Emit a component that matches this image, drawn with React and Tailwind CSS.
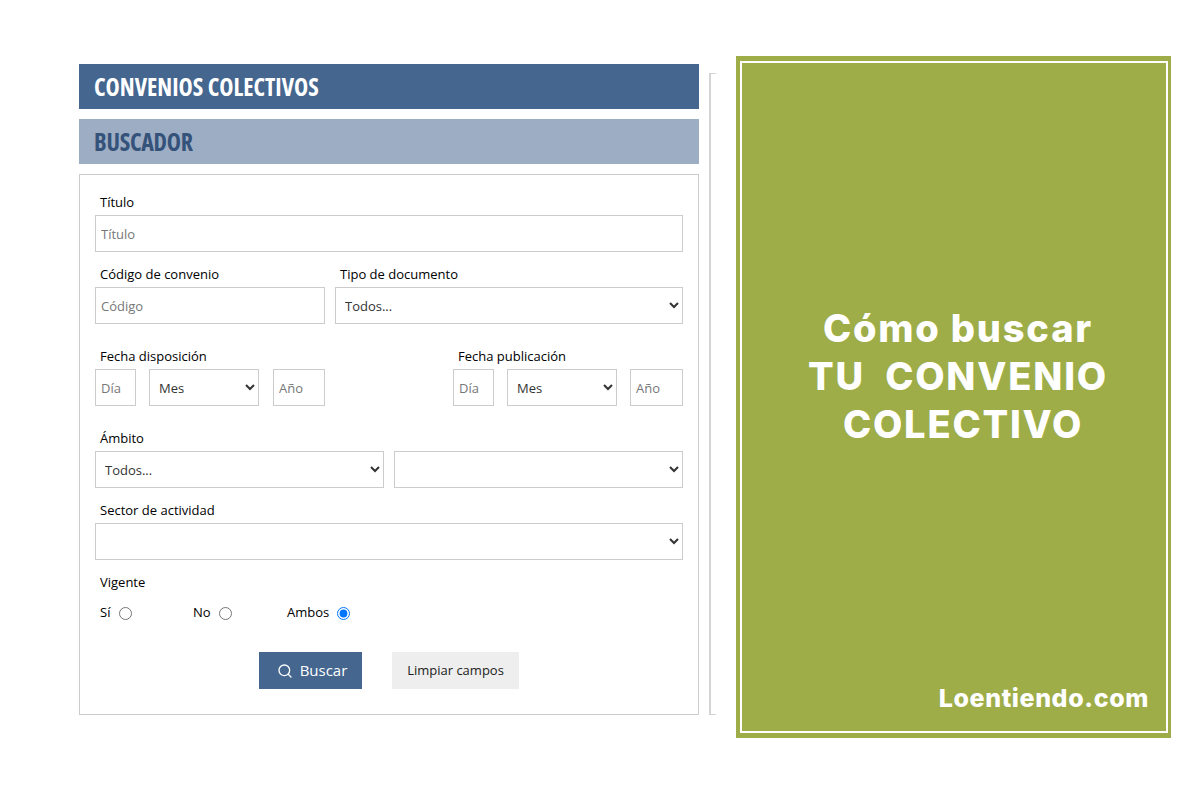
import React from 'react';
import { Search } from 'lucide-react';

const inputCls = 'h-[37px] border border-[#cccccc] bg-white px-[5px] text-[13px] text-[#333] placeholder:text-[#777] outline-none rounded-none';
const selectCls = 'h-[37px] border border-[#cccccc] bg-white pl-[5px] text-[13px] text-[#333] outline-none rounded-none';

const Label = ({ children }) => (
  <div className="h-5 mb-[3px] pl-[5px] text-[13px] leading-5 font-medium text-black">{children}</div>
);

const Select = ({ className, children }) => (
  <select className={`${selectCls} ${className}`} defaultValue="">
    <option value="">{children}</option>
  </select>
);

const DateGroup = ({ label, className, yearClass }) => (
  <div className={className}>
    <Label>{label}</Label>
    <div className="flex">
      <input placeholder="Día" className={`${inputCls} w-[41px]`} />
      <Select className="w-[110px] ml-[13px]">Mes</Select>
      <input placeholder="Año" className={`${inputCls} ${yearClass}`} />
    </div>
  </div>
);

const Radio = ({ label, className, gap, checked }) => (
  <label className={`flex items-center text-[13px] font-medium text-black ${className}`}>
    <span>{label}</span>
    <input type="radio" name="vigente" defaultChecked={checked} className={`w-[13px] h-[13px] m-0 ${gap}`} />
  </label>
);

export default function App() {
  return (
    <div className="w-[1200px] h-[803px] bg-white flex items-start pt-[56px] pl-[79px] font-['Open_Sans',sans-serif] overflow-hidden">
      <div className="w-[620px] pt-2 shrink-0">
        <div className="h-[45px] bg-[#44668f] pl-[15px] flex items-center">
          <h1 className="text-[24px] font-bold text-white [font-stretch:75%]">CONVENIOS COLECTIVOS</h1>
        </div>
        <div className="h-[45px] mt-[10px] bg-[#9dadc3] pl-[15px] flex items-center">
          <h2 className="text-[24px] font-bold tracking-[-0.25px] text-[#34527a] [font-stretch:75%]">BUSCADOR</h2>
        </div>
        <form className="h-[541px] mt-[10px] border border-[#cccccc] pt-[17px] px-[15px]">
          <Label>Título</Label>
          <input placeholder="Título" className={`${inputCls} w-[588px] block`} />

          <div className="flex gap-[10px] mt-3">
            <div>
              <Label>Código de convenio</Label>
              <input placeholder="Código" className={`${inputCls} w-[230px] block`} />
            </div>
            <div>
              <Label>Tipo de documento</Label>
              <Select className="w-[348px] block">Todos...</Select>
            </div>
          </div>

          <div className="flex mt-[22px]">
            <DateGroup label="Fecha disposición" yearClass="w-[52px] ml-[14px]" />
            <DateGroup label="Fecha publicación" yearClass="w-[53px] ml-[13px]" className="ml-[128px]" />
          </div>

          <div className="mt-[22px]">
            <Label>Ámbito</Label>
            <div className="flex gap-[10px]">
              <Select className="w-[289px]">Todos...</Select>
              <Select className="w-[289px]"></Select>
            </div>
          </div>

          <div className="mt-3">
            <Label>Sector de actividad</Label>
            <Select className="w-[588px] block"></Select>
          </div>

          <div className="mt-3">
            <Label>Vigente</Label>
            <div className="flex items-center h-5 mt-[11px] pl-[5px]">
              <Radio label="Sí" className="w-[93px]" gap="ml-[9px]" />
              <Radio label="No" className="w-[94px]" gap="ml-[8px]" />
              <Radio label="Ambos" gap="ml-[8px]" checked />
            </div>
          </div>

          <div className="flex mt-[29px] pl-[164px]">
            <button type="button" className="w-[103px] h-[37px] pl-[3px] bg-[#44668f] text-white text-[15px] flex items-center justify-center gap-[7px]">
              <Search size={16} strokeWidth={2} />
              Buscar
            </button>
            <button type="button" className="w-[127px] h-[37px] ml-[30px] bg-[#eeeeee] text-[#222] text-[13px]">
              Limpiar campos
            </button>
          </div>
        </form>
      </div>

      <div className="w-[7px] h-[642px] ml-[10px] mt-[17px] border-l-2 border-t border-b border-[#d4d4d4] shrink-0"></div>

      <div className="w-[435px] h-[682px] ml-[20px] pl-[4px] py-[5px] bg-[#9ead47] shrink-0">
        <div className="h-full w-[428px] border-2 border-white flex flex-col font-['Inter',sans-serif] text-white font-extrabold">
          <div className="pt-[241px] pl-[8px] text-center text-[38px] leading-[48px] tracking-[1.8px] whitespace-pre">
            <div>Cómo buscar</div>
            <div>TU  CONVENIO</div>
            <div> COLECTIVO</div>
          </div>
          <div className="mt-auto pb-[17px] pr-[17px] text-right text-[25px] leading-8 tracking-[0.6px]">Loentiendo.com</div>
        </div>
      </div>
    </div>
  );
}
